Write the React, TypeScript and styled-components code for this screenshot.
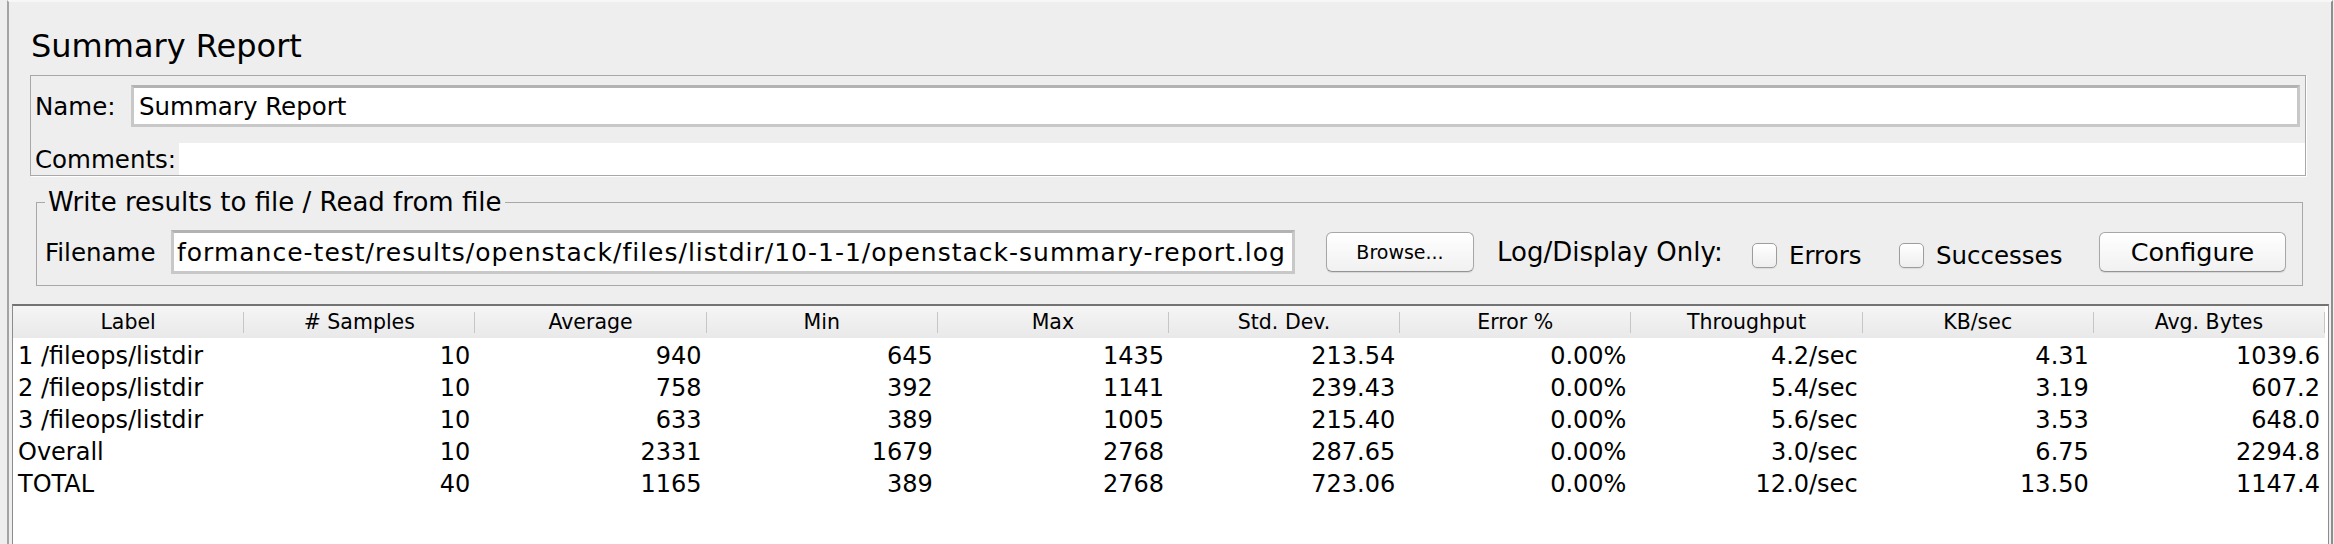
import React from 'react';
import styled, { createGlobalStyle } from 'styled-components';

const COLUMNS = [
  'Label',
  '# Samples',
  'Average',
  'Min',
  'Max',
  'Std. Dev.',
  'Error %',
  'Throughput',
  'KB/sec',
  'Avg. Bytes',
];

const ROWS: string[][] = [
  ['1 /fileops/listdir', '10', '940', '645', '1435', '213.54', '0.00%', '4.2/sec', '4.31', '1039.6'],
  ['2 /fileops/listdir', '10', '758', '392', '1141', '239.43', '0.00%', '5.4/sec', '3.19', '607.2'],
  ['3 /fileops/listdir', '10', '633', '389', '1005', '215.40', '0.00%', '5.6/sec', '3.53', '648.0'],
  ['Overall', '10', '2331', '1679', '2768', '287.65', '0.00%', '3.0/sec', '6.75', '2294.8'],
  ['TOTAL', '40', '1165', '389', '2768', '723.06', '0.00%', '12.0/sec', '13.50', '1147.4'],
];

const GlobalStyle = createGlobalStyle`
  html, body {
    margin: 0;
    padding: 0;
    background: #eeeeee;
  }
  body {
    font-family: "DejaVu Sans", "Liberation Sans", sans-serif;
    color: #000;
  }
  * {
    box-sizing: border-box;
  }
`;

const Frame = styled.div`
  height: 544px;
  padding: 0 1px 0 7px;
  background: #eeeeee;
  overflow: hidden;
`;

const Panel = styled.div`
  height: 100%;
  display: flex;
  flex-direction: column;
  background: #eeeeee;
  border-left: 2px solid #a3a3a3;
  border-right: 2px solid #8e8e8e;
  border-top: 2px solid #f7f7f7;
`;

const Title = styled.div`
  margin: 27px 0 0 22px;
  font-size: 32px;
  line-height: 34px;
`;

const NameBox = styled.div`
  margin: 12px 25px 0 21px;
  padding: 9px 0 0 4px;
  border: 1px solid #a8a8a8;
  box-shadow: 1px 1px 0 #ffffff;
`;

const NameRow = styled.div`
  display: flex;
  align-items: center;
  height: 42px;
  padding-right: 5px;
`;

const CommentsRow = styled.div`
  display: flex;
  align-items: center;
  height: 32px;
  margin-top: 16px;
`;

const FieldLabel = styled.div<{ $w: number; $size?: number }>`
  flex: none;
  width: ${(p) => p.$w}px;
  font-size: ${(p) => p.$size ?? 24.5}px;
  white-space: nowrap;
`;

const TextField = styled.div<{ $size: number; $spacing: number }>`
  display: flex;
  align-items: center;
  height: 100%;
  padding-left: 5px;
  background: #fff;
  border: 3px solid #c8c8c8;
  border-top-color: #b3b3b3;
  font-size: ${(p) => p.$size}px;
  letter-spacing: ${(p) => p.$spacing}px;
  white-space: nowrap;
  overflow: hidden;
`;

const NameField = styled(TextField)`
  flex: 1;
`;

const FileField = styled(TextField)`
  flex: none;
  width: 1124px;
  padding-left: 3px;
`;

const CommentsArea = styled.div`
  flex: 1;
  height: 100%;
  background: #fff;
`;

const Group = styled.fieldset`
  margin: 11px 28px 0 27px;
  padding: 13px 16px 11px 8px;
  border: 1px solid #a8a8a8;
  min-width: 0;
`;

const Legend = styled.legend`
  padding: 0 3px;
  font-size: 26px;
  line-height: 30px;
`;

const FileRow = styled.div`
  display: flex;
  align-items: center;
  height: 44px;
`;

const Button = styled.button<{ $w: number; $size: number; $gap: number }>`
  flex: none;
  width: ${(p) => p.$w}px;
  height: 40px;
  margin-left: ${(p) => p.$gap}px;
  padding: 0;
  font-family: "DejaVu Sans", "Liberation Sans", sans-serif;
  font-size: ${(p) => p.$size}px;
  color: #000;
  background: linear-gradient(#ffffff, #f1f1f1);
  border: 1px solid #a7a7a7;
  border-bottom-color: #949494;
  border-radius: 6px;
  box-shadow: 0 1px 1px rgba(0, 0, 0, 0.1);
`;

const OnlyLabel = styled.div`
  flex: none;
  width: 255px;
  margin-left: 23px;
  font-size: 26px;
  white-space: nowrap;
`;

const CheckItem = styled.label<{ $w: number }>`
  flex: none;
  display: flex;
  align-items: center;
  width: ${(p) => p.$w}px;
  padding-top: 6px;
  font-size: 24.5px;
  white-space: nowrap;
`;

const CheckBox = styled.span`
  flex: none;
  width: 25px;
  height: 25px;
  margin-right: 12px;
  border: 1px solid #9d9d9d;
  border-radius: 5px;
  background: linear-gradient(#ffffff, #eeeeee);
  box-shadow: 0 1px 1px rgba(0, 0, 0, 0.08);
`;

const Table = styled.div`
  flex: 1;
  margin: 18px 2px 0 3px;
  padding-right: 3px;
  background: #fff;
  border: 1px solid #8c8c8c;
  border-top: 2px solid #737373;
  border-bottom: none;
`;

const HeaderRow = styled.div`
  display: grid;
  grid-template-columns: repeat(10, 1fr);
  height: 32px;
  padding: 6px 0 5px;
  background: linear-gradient(#f5f5f5, #e9e9e9);
`;

const HeaderCell = styled.div`
  border-right: 1px solid #c6c6c6;
  font-size: 20.5px;
  line-height: 21px;
  text-align: center;
  white-space: nowrap;
`;

const Body = styled.div`
  padding-top: 2.5px;
`;

const Row = styled.div`
  display: grid;
  grid-template-columns: repeat(10, 1fr);
  height: 32px;
`;

const Cell = styled.div<{ $left?: boolean }>`
  padding: 0 5px;
  font-size: 24px;
  line-height: 31.5px;
  text-align: ${(p) => (p.$left ? 'left' : 'right')};
  white-space: nowrap;
`;

export default function App() {
  return (
    <>
      <GlobalStyle />
      <Frame>
        <Panel>
          <Title>Summary Report</Title>

          <NameBox>
            <NameRow>
              <FieldLabel $w={96}>Name:</FieldLabel>
              <NameField $size={24.5} $spacing={0}>
                Summary Report
              </NameField>
            </NameRow>
            <CommentsRow>
              <FieldLabel $w={144}>Comments:</FieldLabel>
              <CommentsArea />
            </CommentsRow>
          </NameBox>

          <Group>
            <Legend>Write results to file / Read from file</Legend>
            <FileRow>
              <FieldLabel $w={126}>Filename</FieldLabel>
              <FileField $size={25} $spacing={1}>
                formance-test/results/openstack/files/listdir/10-1-1/openstack-summary-report.log
              </FileField>
              <Button $w={148} $size={19} $gap={31}>
                Browse...
              </Button>
              <OnlyLabel>Log/Display Only:</OnlyLabel>
              <CheckItem $w={147}>
                <CheckBox />
                Errors
              </CheckItem>
              <CheckItem $w={200}>
                <CheckBox />
                Successes
              </CheckItem>
              <Button $w={187} $size={25.5} $gap={0}>
                Configure
              </Button>
            </FileRow>
          </Group>

          <Table>
            <HeaderRow>
              {COLUMNS.map((c) => (
                <HeaderCell key={c}>{c}</HeaderCell>
              ))}
            </HeaderRow>
            <Body>
              {ROWS.map((r) => (
                <Row key={r[0]}>
                  {r.map((v, i) => (
                    <Cell key={i} $left={i === 0}>
                      {v}
                    </Cell>
                  ))}
                </Row>
              ))}
            </Body>
          </Table>
        </Panel>
      </Frame>
    </>
  );
}
